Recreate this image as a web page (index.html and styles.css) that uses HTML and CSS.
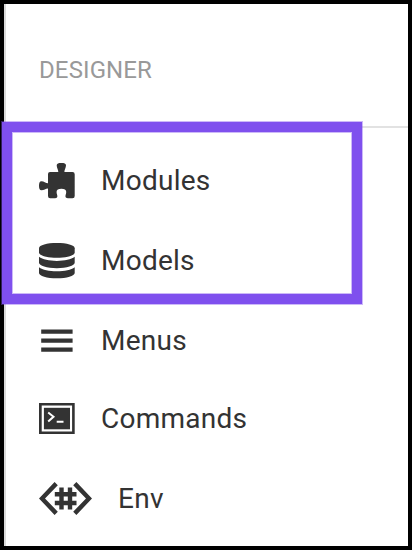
FILE: index.html
```html
<!DOCTYPE html>
<html lang="en">
<head>
<meta charset="utf-8">
<title>Designer</title>
<link rel="stylesheet" href="styles.css">
</head>
<body>
<div class="panel">
  <header class="heading"><span>DESIGNER</span></header>
  <nav class="menu">
    <a class="item">
      <svg class="icon" width="36" height="36" viewBox="0 0 36 36"><path d="M11 9H19.300C19.300 6.500 17.700 5 17.700 2.300C17.700 .5 19.500 0 22.400 0S27 .5 27 2.300C27 5 25.400 6.500 25.400 9H33.500Q35.700 9 35.700 11.200V33Q35.700 35.200 33.500 35.200H29Q26 35.200 26.500 32.500C27 30.500 27.200 30.500 27.200 28.800C27.200 26.500 25.500 25.700 22.400 25.700S17.600 26.500 17.600 28.800C17.600 30.500 17.800 30.500 18.300 32.500Q18.800 35.200 16 35.200H11.200Q9 35.200 9 33V25.400C6.500 25.400 5 27.300 2.500 27.300C.5 27.300 0 25.500 0 22.800S.5 18.300 2.500 18.300C5 18.300 6.500 20.300 9 20.300V11Q9 9 11 9Z"/></svg>
      <span class="label">Modules</span>
    </a>
    <a class="item">
      <svg class="icon" width="36" height="36" viewBox="0 0 36 36"><path d="M0 5.300C0 2 8 0 17.850 0S35.700 2 35.700 5.300V9.500C35.700 12.500 27.700 14.800 17.850 14.800S0 12.500 0 9.500Z"/><path d="M0 13.800C3.500 16.600 10 17.900 17.850 17.900S32.200 16.600 35.700 13.800V19.800C35.700 22.800 27.700 25.200 17.850 25.200S0 22.800 0 19.800Z"/><path d="M0 24.200C3.500 27 10 28.300 17.850 28.300S32.200 27 35.700 24.200V30C35.700 33 27.700 35.300 17.850 35.300S0 33 0 30Z"/></svg>
      <span class="label">Models</span>
    </a>
    <a class="item">
      <svg class="icon" width="36" height="36" viewBox="0 0 36 36"><path d="M2.200 6.400H33.600V10.700H2.200ZM2.200 15.400H33.600V19.700H2.200ZM2.200 24.400H33.600V28.700H2.200Z"/></svg>
      <span class="label">Menus</span>
    </a>
    <a class="item shift">
      <svg class="icon" width="36" height="36" viewBox="0 0 36 36"><path fill-rule="evenodd" d="M0 2H35.700V33H0ZM2.700 4.600V30.400H33.100V4.600Z"/><path d="M4.900 6.800H31V28.300H4.900Z"/><path class="prompt" d="M9.200 11.500L14.500 15.700L9.200 20.500M17.700 20.700H24.500"/></svg>
      <span class="label">Commands</span>
    </a>
    <a class="item">
      <svg class="icon" width="53" height="36" viewBox="0 0 53 36"><path d="M15.600 .9L18.800 4.200L6 17.500L18.800 30.700L15.600 34L0 17.500ZM37.400 .9L34.200 4.200L47 17.500L34.200 30.700L37.400 34L53 17.500Z"/><path class="hash" d="M22.500 6.500V28.500M31 6.500V28.500M15.800 13.200H37.500M15.800 22H37.500"/></svg>
      <span class="label">Env</span>
    </a>
  </nav>
  <div class="highlight"></div>
</div>
</body>
</html>
```
FILE: styles.css
```css
* {
  box-sizing: border-box;
}

body {
  margin: 0;
  background: #000;
  padding: 4px;
  font-family: Roboto, sans-serif;
}

.panel {
  height: 542px;
  background: #fff;
  border-left: 2px solid #dadada;
}

.heading {
  height: 124px;
  padding: 52px 0 0 33px;
  border-bottom: 2px solid #e2e2e2;
  color: #999;
  font-size: 24px;
  line-height: 28px;
  letter-spacing: 0.12px;
}

.menu {
  display: flex;
  flex-direction: column;
  gap: 44px;
  padding: 35px 0 0 33px;
}

.item {
  display: flex;
  align-items: center;
  gap: 26px;
  height: 36px;
  color: #333;
  font-size: 28px;
  line-height: 36px;
  letter-spacing: 0.25px;
}

.shift {
  margin-top: -2px;
}

.icon {
  flex: none;
  fill: #333;
}

.prompt {
  fill: none;
  stroke: #fff;
  stroke-width: 2;
}

.hash {
  fill: none;
  stroke: #333;
  stroke-width: 4.400;
}

.highlight {
  position: absolute;
  left: 2px;
  top: 122px;
  width: 360px;
  height: 182px;
  border: 10px solid #7f50ee;
  box-shadow: 0 0 0 1px rgba(127, 80, 238, 0.4), inset 0 0 0 1px rgba(127, 80, 238, 0.4);
}
```
